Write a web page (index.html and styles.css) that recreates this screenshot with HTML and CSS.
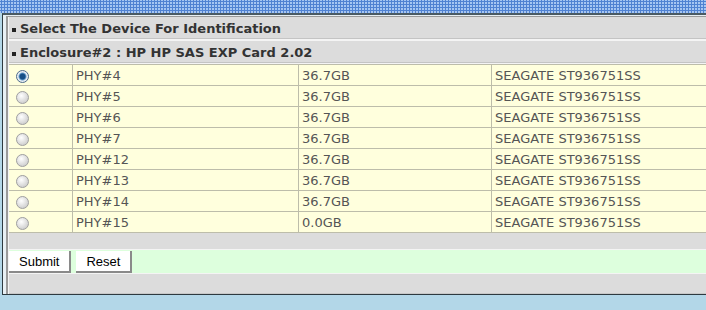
FILE: index.html
```html
<!DOCTYPE html>
<html lang="en">
<head>
    <meta charset="UTF-8">
    <title>Select The Device For Identification</title>
    <link rel="stylesheet" href="styles.css">
</head>
<body>
    <div class="topbar"></div>
    <div class="frame">
        <div class="panel">
            <div class="title"><span class="dot"></span>Select The Device For Identification</div>
            <div class="title"><span class="dot"></span>Enclosure#2 : HP HP SAS EXP Card 2.02</div>
            <table class="devices">
                <tr><td class="sel"><input type="radio" name="phy" checked></td><td class="c2">PHY#4</td><td class="c3">36.7GB</td><td>SEAGATE ST936751SS</td></tr>
                <tr><td class="sel"><input type="radio" name="phy"></td><td>PHY#5</td><td>36.7GB</td><td>SEAGATE ST936751SS</td></tr>
                <tr><td class="sel"><input type="radio" name="phy"></td><td>PHY#6</td><td>36.7GB</td><td>SEAGATE ST936751SS</td></tr>
                <tr><td class="sel"><input type="radio" name="phy"></td><td>PHY#7</td><td>36.7GB</td><td>SEAGATE ST936751SS</td></tr>
                <tr><td class="sel"><input type="radio" name="phy"></td><td>PHY#12</td><td>36.7GB</td><td>SEAGATE ST936751SS</td></tr>
                <tr><td class="sel"><input type="radio" name="phy"></td><td>PHY#13</td><td>36.7GB</td><td>SEAGATE ST936751SS</td></tr>
                <tr><td class="sel"><input type="radio" name="phy"></td><td>PHY#14</td><td>36.7GB</td><td>SEAGATE ST936751SS</td></tr>
                <tr><td class="sel"><input type="radio" name="phy"></td><td>PHY#15</td><td>0.0GB</td><td>SEAGATE ST936751SS</td></tr>
            </table>
            <div class="spacer"></div>
            <div class="actions">
                <button type="submit">Submit</button>
                <button type="reset">Reset</button>
            </div>
            <div class="spacer bottom"></div>
        </div>
    </div>
    <div class="footer"></div>
</body>
</html>
```

FILE: styles.css
```css
html, body {
    margin: 0;
    padding: 0;
    overflow: hidden;
}
body {
    background: #b3d7e8;
    font-family: "DejaVu Sans", Verdana, sans-serif;
}
.topbar {
    height: 13px;
    background-color: #a6c6f2;
    background-image: radial-gradient(circle, #4f82d2 1px, transparent 1.3px);
    background-size: 3px 3px;
}
.frame {
    margin-left: 2px;
    border-left: 1px solid #2e3a40;
    border-top: 2px solid #4a5a62;
    background: #e8f0f4;
    padding: 1px 0 0 3px;
    border-bottom: 1px solid #2e3a40;
}
.panel {
    border-left: 2px solid #9a9a9a;
    border-top: 1px solid #9a9a9a;
    background: #f4f4f4;
    padding-left: 1px;
}
.title {
    background: #dcdcdc;
    color: #333;
    font-weight: bold;
    font-size: 13px;
    height: 22px;
    line-height: 23px;
    padding-left: 3px;
    border-bottom: 2px solid #f4f4f4;
    box-shadow: inset 0 -1px 0 #c4c4c4;
}
.dot {
    display: inline-block;
    width: 4px;
    height: 4px;
    background: #222;
    margin-right: 4px;
    vertical-align: 1px;
}
.devices {
    border-collapse: collapse;
    width: 100%;
    background: #ffffdd;
    margin-top: -1px;
}
.devices td {
    border: 1px solid #bdbdaa;
    height: 20px;
    padding: 0 3px;
    font-size: 13px;
    color: #555;
}
.devices td.sel {
    width: 57px;
    border-left: none;
}
.devices td:last-child {
    border-right: none;
}
.devices .c2 {
    width: 219px;
}
.devices .c3 {
    width: 186px;
}
.devices input[type="radio"] {
    appearance: none;
    -webkit-appearance: none;
    width: 13px;
    height: 13px;
    margin: 3px 0 0 4px;
    border: 1px solid #a0a0a0;
    border-radius: 50%;
    background: radial-gradient(circle at 40% 35%, #ffffff, #d0d0d0 75%);
    box-sizing: border-box;
    display: block;
}
.devices input[type="radio"]:checked {
    border-color: #4e6c8a;
    background: radial-gradient(circle, #164f86 0, #164f86 2.6px, #5f98c8 3.4px, #e8eef4 4.5px);
}
.spacer {
    height: 16px;
    background: #dcdcdc;
    border-bottom: 1px solid #f4f4f4;
}
.spacer.bottom {
    height: 19px;
    border-top: 1px solid #f4f4f4;
    border-bottom: 1px solid #c8c8c8;
}
.actions {
    background: #ddffdd;
    height: 23px;
    display: flex;
    gap: 5px;
    align-items: center;
}
.actions button {
    font-family: "Liberation Sans", Arial, sans-serif;
    font-size: 13px;
    color: #000;
    background: #ffffff;
    border: none;
    border-right: 2px solid #8a8a8a;
    border-bottom: 2px solid #8a8a8a;
    height: 22px;
    padding: 0 10px;
    margin-top: 1px;
}
.footer {
    height: 20px;
}
```
